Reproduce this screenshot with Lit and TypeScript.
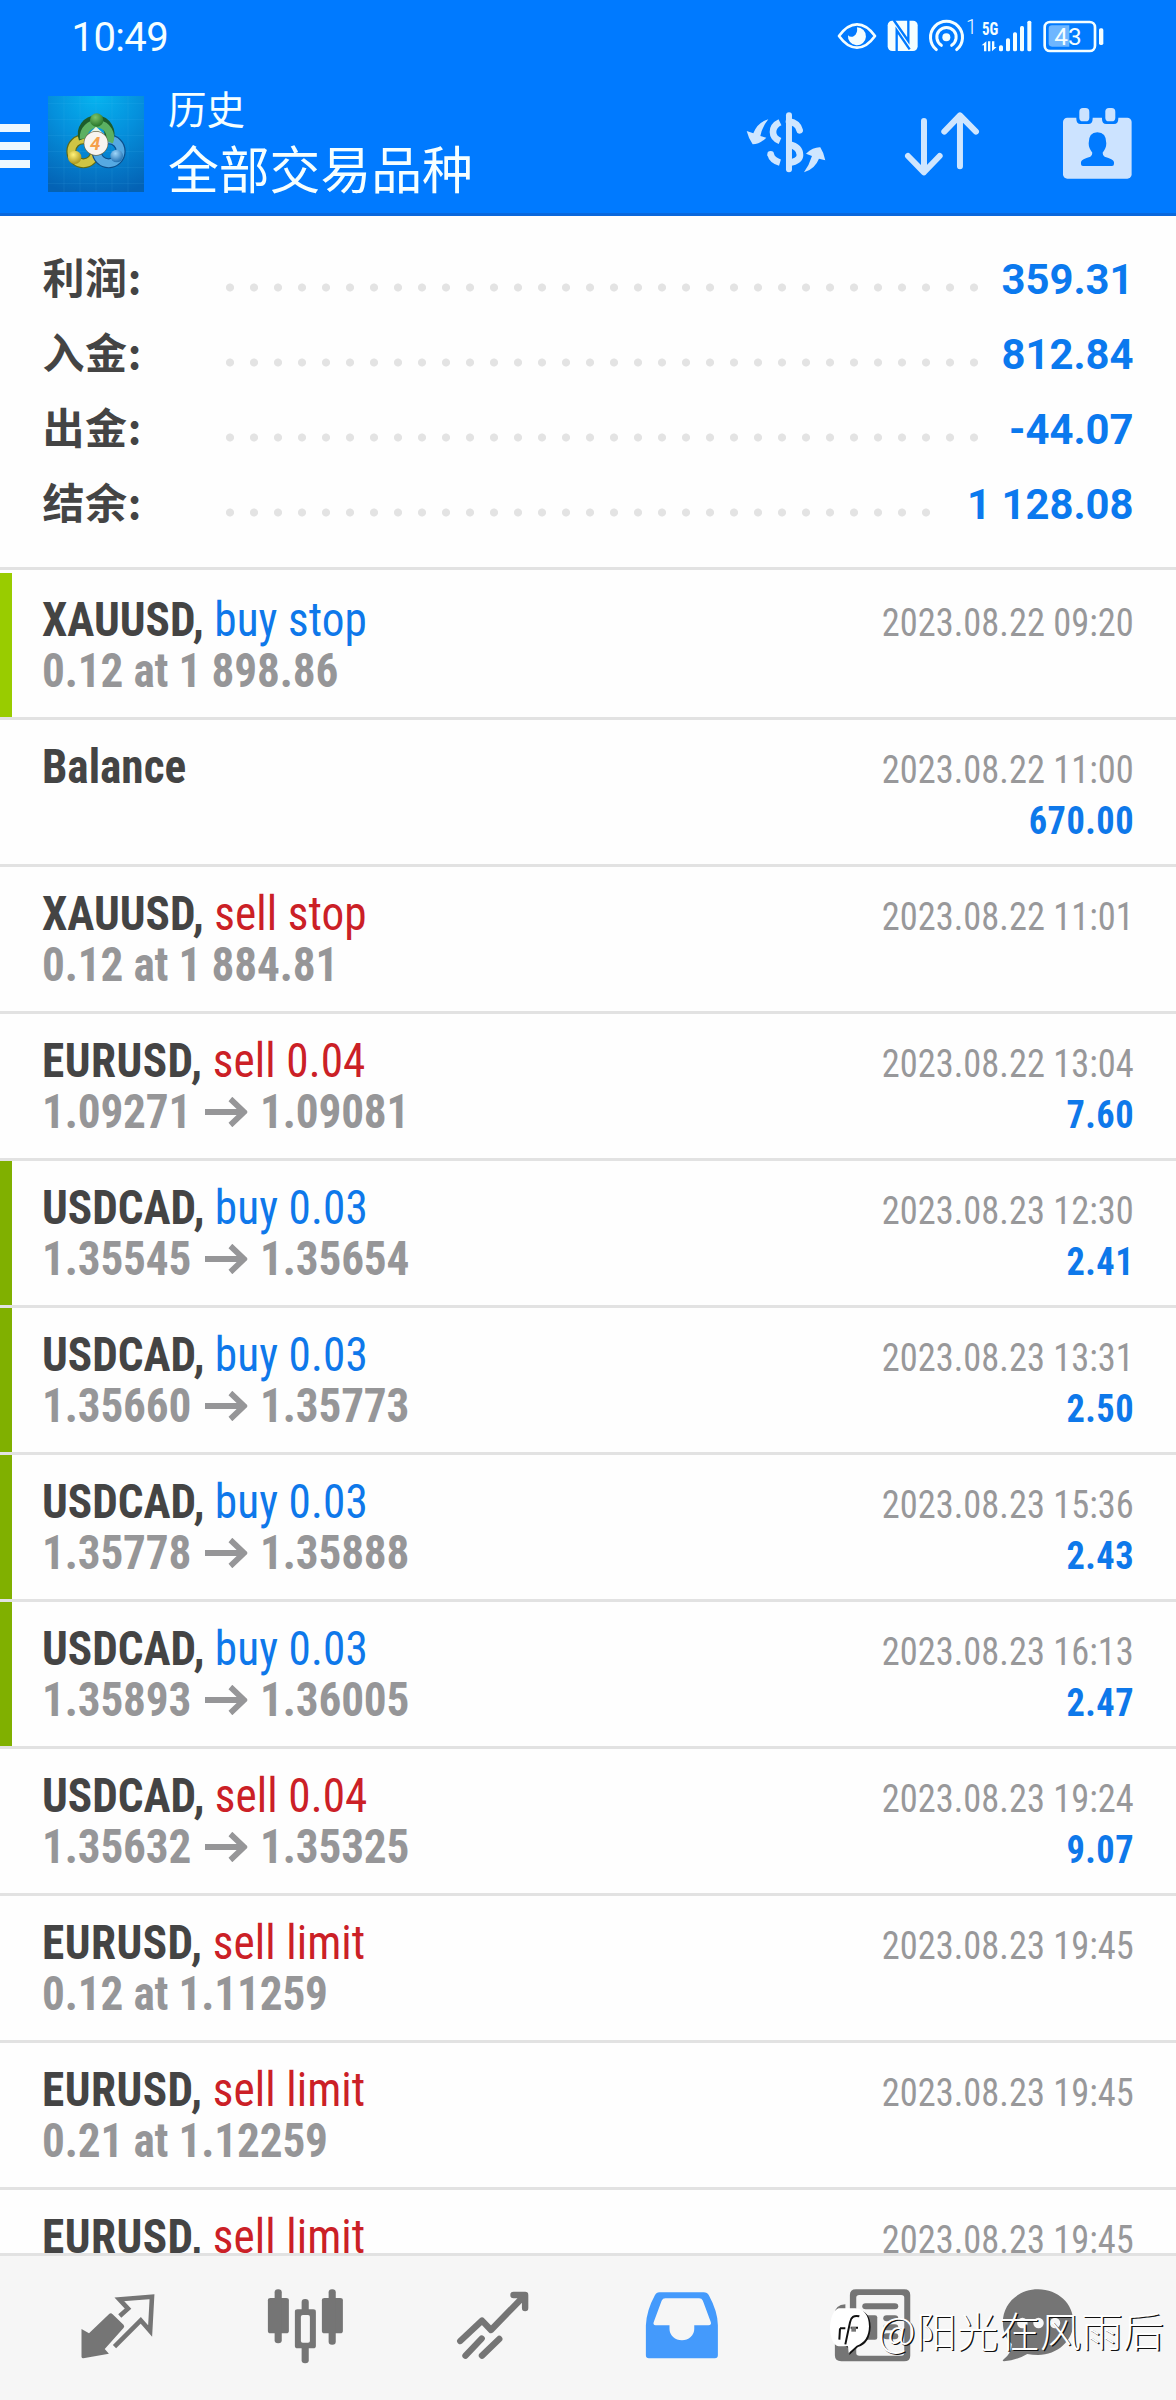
import { LitElement, html, svg, css, nothing } from "lit";
import { customElement, property } from "lit/decorators.js";
import { classMap } from "lit/directives/class-map.js";

type Kind = "buy" | "sell";

interface Deal {
  symbol: string;
  action?: string;
  kind?: Kind;
  detail?: string;
  from?: string;
  to?: string;
  time: string;
  amount?: string;
  mark?: "open" | "profit";
}

interface Total {
  label: string;
  value: string;
  dots: number;
}

const TOTALS: Total[] = [
  { label: "利润:", value: "359.31", dots: 32 },
  { label: "入金:", value: "812.84", dots: 32 },
  { label: "出金:", value: "-44.07", dots: 32 },
  { label: "结余:", value: "1 128.08", dots: 30 },
];

const DEALS: Deal[] = [
  { symbol: "XAUUSD,", action: "buy stop", kind: "buy", detail: "0.12 at 1 898.86", time: "2023.08.22 09:20", mark: "open" },
  { symbol: "Balance", time: "2023.08.22 11:00", amount: "670.00" },
  { symbol: "XAUUSD,", action: "sell stop", kind: "sell", detail: "0.12 at 1 884.81", time: "2023.08.22 11:01" },
  { symbol: "EURUSD,", action: "sell 0.04", kind: "sell", from: "1.09271", to: "1.09081", time: "2023.08.22 13:04", amount: "7.60" },
  { symbol: "USDCAD,", action: "buy 0.03", kind: "buy", from: "1.35545", to: "1.35654", time: "2023.08.23 12:30", amount: "2.41", mark: "profit" },
  { symbol: "USDCAD,", action: "buy 0.03", kind: "buy", from: "1.35660", to: "1.35773", time: "2023.08.23 13:31", amount: "2.50", mark: "profit" },
  { symbol: "USDCAD,", action: "buy 0.03", kind: "buy", from: "1.35778", to: "1.35888", time: "2023.08.23 15:36", amount: "2.43", mark: "profit" },
  { symbol: "USDCAD,", action: "buy 0.03", kind: "buy", from: "1.35893", to: "1.36005", time: "2023.08.23 16:13", amount: "2.47", mark: "profit" },
  { symbol: "USDCAD,", action: "sell 0.04", kind: "sell", from: "1.35632", to: "1.35325", time: "2023.08.23 19:24", amount: "9.07" },
  { symbol: "EURUSD,", action: "sell limit", kind: "sell", detail: "0.12 at 1.11259", time: "2023.08.23 19:45" },
  { symbol: "EURUSD,", action: "sell limit", kind: "sell", detail: "0.21 at 1.12259", time: "2023.08.23 19:45" },
  { symbol: "EURUSD,", action: "sell limit", kind: "sell", time: "2023.08.23 19:45" },
];

const CJK = css`"Noto Sans CJK SC", sans-serif`;

/** System status bar: clock on the left, indicators on the right. */
@customElement("status-bar")
export class StatusBar extends LitElement {
  static styles = css`
    :host {
      display: flex;
      justify-content: space-between;
      height: 72px;
      color: #f4feff;
      font-family: Roboto, sans-serif;
    }
    .clock {
      padding-left: 71.5px;
      font-size: 40px;
      line-height: 75px;
      letter-spacing: -0.6px;
    }
    .indicators {
      display: block;
      width: 456px;
      height: 72px;
    }
    .thin {
      font-family: Roboto, sans-serif;
      font-weight: 300;
    }
    .gen {
      font-family: "Roboto Condensed", Roboto, sans-serif;
      font-weight: 700;
    }
    .level {
      font-family: Roboto, sans-serif;
      font-weight: 400;
    }
  `;

  render() {
    return html`
      <div class="clock">10:49</div>
      <svg class="indicators" viewBox="0 0 1368 216" fill="#f4feff">
        <path
          d="M357 108 Q382 73 411 73 Q440 73 465 108 Q440 143 411 143 Q382 143 357 108Z"
          fill="none" stroke="#f4feff" stroke-width="8" stroke-linejoin="round"
        />
        <path d="M411 82 a27 27 0 1 1 -27 24 q8 8 18 2 q12 -8 9 -26z" />
        <rect x="503" y="62" width="90" height="91" rx="14" />
        <path d="M530 156V91L569 148M521 60L565 123V59" fill="none" stroke="#007aff" stroke-width="7" />
        <g fill="none" stroke="#f4feff" stroke-linecap="round">
          <path d="M649 149 a48 48 0 1 1 61 0" stroke-width="9" />
          <path d="M664 136 a29 29 0 1 1 31 0" stroke-width="9" />
        </g>
        <circle cx="679" cy="112" r="12" />
        <text class="thin" x="738" y="102" font-size="58">1</text>
        <text class="gen" x="786" y="104" font-size="57" textLength="49" lengthAdjust="spacingAndGlyphs">5G</text>
        <path d="M799 124 v30 h-7 v-18 h-7z M804 124 h7 v30 h-7z M816 124 v30 l14 -13 h-7 v-17z" />
        <rect x="837" y="136" width="12" height="18" rx="5" />
        <rect x="858" y="115" width="12" height="39" rx="5" />
        <rect x="879" y="97" width="12" height="57" rx="5" />
        <rect x="900" y="78" width="12" height="76" rx="5" />
        <rect x="922" y="62" width="12" height="92" rx="5" />
        <rect x="974" y="66" width="151" height="87" rx="16" fill="none" stroke="#f4feff" stroke-width="8" />
        <path d="M996 76 h52 v64 h-52 q-10 0 -10 -10 v-44 q0 -10 10 -10z" opacity=".45" />
        <rect x="1137" y="85" width="13" height="50" rx="5" />
        <text class="level" x="1003" y="134" font-size="73">43</text>
      </svg>
    `;
  }
}

/** Title bar with the menu handle, application logo and the three actions. */
@customElement("title-bar")
export class TitleBar extends LitElement {
  static styles = css`
    :host {
      display: flex;
      align-items: flex-start;
      height: 141px;
      padding-right: 43px;
      border-bottom: 3px solid #0a68dc;
      color: #f6ffff;
    }
    .menu {
      display: flex;
      flex-direction: column;
      gap: 10px;
      width: 30px;
      padding-top: 52px;
      margin-right: 18px;
    }
    .bar {
      height: 8px;
      background: #eef8ff;
    }
    .logo {
      width: 96px;
      height: 96px;
      margin: 24px 24px 0 0;
    }
    .four {
      font: italic 700 56px Roboto, sans-serif;
    }
    .titles {
      flex: 1;
      padding-top: 7px;
      font-family: ${CJK};
    }
    .section {
      font-size: 38.5px;
      line-height: 56px;
    }
    .scope {
      font-size: 50.8px;
      line-height: 65px;
    }
    .actions {
      display: flex;
      align-items: center;
      padding-top: 34.5px;
      gap: 79.5px;
    }
    .action {
      display: block;
      height: 73.3px;
    }
    .sort {
      margin: 0 3px 0 -2px;
    }
  `;

  render() {
    return html`
      <div class="menu">
        <div class="bar"></div>
        <div class="bar"></div>
        <div class="bar"></div>
      </div>
      <svg class="logo" viewBox="0 0 288 288">
        <defs>
          <radialGradient id="sky" cx=".5" cy="0" r="1.05">
            <stop offset="0" stop-color="#06b4f0" />
            <stop offset=".45" stop-color="#0590dc" />
            <stop offset="1" stop-color="#0462b4" />
          </radialGradient>
          <radialGradient id="gb" cx=".4" cy=".3" r=".8"><stop offset="0" stop-color="#7cc46a" /><stop offset="1" stop-color="#1c6a22" /></radialGradient>
          <radialGradient id="yb" cx=".4" cy=".3" r=".8"><stop offset="0" stop-color="#fff27a" /><stop offset="1" stop-color="#a08a10" /></radialGradient>
          <radialGradient id="bb" cx=".4" cy=".3" r=".8"><stop offset="0" stop-color="#9fd6fa" /><stop offset="1" stop-color="#1263a8" /></radialGradient>
        </defs>
        <rect width="288" height="288" fill="url(#sky)" />
        <path
          d="M48 0V288M96 0V288M144 0V288M192 0V288M240 0V288M0 22H288M0 70H288M0 118H288M0 166H288M0 214H288M0 262H288"
          stroke="#5cc4f4" stroke-opacity=".18" stroke-width="2"
        />
        <g fill="none">
          <circle cx="106" cy="166" r="36" stroke="#5d6a18" stroke-width="30" />
          <circle cx="106" cy="166" r="36" stroke="#cfc544" stroke-width="23" />
          <circle cx="182" cy="166" r="36" stroke="#0c4f8c" stroke-width="30" />
          <circle cx="182" cy="166" r="36" stroke="#56a9e2" stroke-width="23" />
          <path d="M107 128 A40 40 0 1 1 180 132" stroke="#1d5c2c" stroke-width="30" />
          <path d="M107 128 A40 40 0 1 1 184 138" stroke="#5bb062" stroke-width="23" />
        </g>
        <path d="M122 114 L144 92 L168 114Z" fill="#e8f4e4" />
        <circle cx="146" cy="72" r="20" fill="url(#gb)" />
        <circle cx="80" cy="184" r="20" fill="url(#yb)" />
        <circle cx="206" cy="180" r="19" fill="url(#bb)" />
        <circle cx="144" cy="142" r="37" fill="#6b6b50" />
        <circle cx="144" cy="142" r="35" fill="#f8f4f0" />
        <text class="four" x="126" y="163" fill="#f5a04c">4</text>
      </svg>
      <div class="titles">
        <div class="section">历史</div>
        <div class="scope">全部交易品种</div>
      </div>
      <div class="actions">
        <svg class="action" viewBox="78 320 240 220" fill="#cfe6ff">
          <rect x="198" y="336" width="18" height="180" rx="9" />
          <g fill="none" stroke="#cfe6ff" stroke-width="20">
            <path d="M180 366 Q159 376 159 395 Q159 413 180 422" />
            <path d="M152 462 Q156 480 180 487" stroke-linecap="butt" />
            <path d="M207 363 Q234 368 239 390" stroke-linecap="round" />
            <path d="M207 432 Q240 440 240 464 Q240 482 207 488" />
          </g>
          <circle cx="152" cy="462" r="10" />
          <path d="M145 357 Q112 366 100 399 L80 392 Q86 415 98 432 Q118 432 139 412 L121 407 Q126 380 145 357Z" />
          <path d="M252 516 Q285 506 297 475 L316 480 Q312 458 301 441 Q280 440 258 460 L276 467 Q268 494 252 516Z" />
        </svg>
        <svg class="action sort" viewBox="552 320 228 220" fill="none" stroke="#cfe6ff" stroke-width="18" stroke-linecap="round" stroke-linejoin="round">
          <path d="M612 362V514M564 467L612 516L659 467M720 498V346M673 394L720 345L768 394" />
        </svg>
        <svg class="action" viewBox="1028 320 212 220" fill="#cce3ff">
          <rect x="1031" y="352" width="206" height="183" rx="13" />
          <path d="M1071 350 h49 v5 q0 16 -13 16 h-23 q-13 0 -13 -16z M1148 350 h49 v5 q0 16 -13 16 h-23 q-13 0 -13 -16z" fill="#007aff" />
          <rect x="1080" y="323" width="30" height="40" rx="11" />
          <rect x="1158" y="323" width="30" height="40" rx="11" />
          <path
            d="M1134 396 q27 0 27 33 q0 15 -11 28 q0 9 6 12 q26 7 28 16 v6 q0 6 -6 6 h-87 q-6 0 -6 -6 v-6 q2 -9 28 -16 q6 -3 6 -12 q-11 -13 -11 -28 q0 -33 26 -33z"
            fill="#007aff"
          />
        </svg>
      </div>
    `;
  }
}

/** Account totals joined to their values by a dotted leader. */
@customElement("totals-panel")
export class TotalsPanel extends LitElement {
  static styles = css`
    :host {
      display: block;
      padding: 22px 42.5px 29px 42.5px;
      border-bottom: 3px solid #e2e2e2;
    }
    .total {
      display: flex;
      align-items: baseline;
      height: 75px;
      line-height: 75px;
    }
    .label {
      width: 175.5px;
      font-family: ${CJK};
      font-weight: 700;
      font-size: 42px;
      letter-spacing: 0.6px;
      color: #444;
    }
    .leader {
      height: 13px;
      background: radial-gradient(circle at 12px 6.5px, #e3e3e3 3.6px, transparent 4.4px) 0 0 / 24px 13px repeat-x;
    }
    .value {
      margin-left: auto;
      font-family: Roboto, sans-serif;
      font-weight: 700;
      font-size: 41.8px;
      color: #0b79ee;
    }
  `;

  render() {
    return TOTALS.map(
      (t) => html`
        <div class="total">
          <div class="label">${t.label}</div>
          <div class="leader" style="width:${t.dots * 24}px"></div>
          <div class="value">${t.value}</div>
        </div>
      `,
    );
  }
}

/** One line of the trade history. */
@customElement("deal-row")
export class DealRow extends LitElement {
  @property({ attribute: false }) deal!: Deal;

  static styles = css`
    :host {
      display: block;
      border-bottom: 3px solid #e2e2e2;
    }
    .row {
      display: flex;
      justify-content: space-between;
      box-sizing: border-box;
      height: 144px;
      padding: 21px 42px 0 30px;
      border-left: 12px solid transparent;
      font-family: "Roboto Condensed", Roboto, sans-serif;
      line-height: 51px;
      white-space: nowrap;
    }
    .open {
      border-left-color: #99cc00;
    }
    .profit {
      border-left-color: #80b000;
    }
    .main {
      font-size: 48px;
      transform-origin: 0 0;
      transform: scaleX(0.942);
    }
    .symbol {
      font-weight: 700;
      color: #444;
    }
    .euro {
      letter-spacing: 0.5px;
    }
    .buy {
      letter-spacing: 0.1px;
      color: #0e78ea;
    }
    .sell {
      letter-spacing: 0.1px;
      color: #cb2026;
    }
    .detail {
      display: flex;
      height: 51px;
      font-weight: 700;
      letter-spacing: -0.15px;
      color: #969698;
    }
    .arrow {
      width: 45px;
      height: 30px;
      margin: 11px 13.5px 0 14.5px;
    }
    .side {
      padding-top: 4px;
      font-size: 39px;
      text-align: right;
      transform-origin: 100% 0;
      transform: scaleX(0.934);
      color: #98989a;
    }
    .amount {
      font-weight: 700;
      letter-spacing: 0.5px;
      margin-right: -0.5px;
      color: #0e78ea;
    }
  `;

  render() {
    const d = this.deal;
    const euro = d.symbol.startsWith("EUR");
    return html`
      <div class=${classMap({ row: true, open: d.mark === "open", profit: d.mark === "profit" })}>
        <div class="main">
          <div>
            <span class=${classMap({ symbol: true, euro })}>${d.symbol}</span>
            ${d.action ? html`<span class=${d.kind!}>${d.action}</span>` : nothing}
          </div>
          ${d.detail ? html`<div class="detail">${d.detail}</div>` : nothing}
          ${d.from
            ? html`<div class="detail">
                <span>${d.from}</span>
                <svg class="arrow" viewBox="0 0 45 30" fill="none" stroke="#969698" stroke-width="6">
                  <path d="M0 15H41M27 2L41.5 15L27 28" />
                </svg>
                <span>${d.to}</span>
              </div>`
            : nothing}
        </div>
        <div class="side">
          <div>${d.time}</div>
          ${d.amount ? html`<div class="amount">${d.amount}</div>` : nothing}
        </div>
      </div>
    `;
  }
}

const navIcon = (x: number, w: number, body: unknown) => html`
  <svg
    class="icon"
    viewBox="${x} 380 ${w} 232"
    preserveAspectRatio="none"
    style="width:${(w * 0.375).toFixed(2)}px"
  >${body}</svg>
`;

/** Bottom navigation. */
@customElement("nav-bar")
export class NavBar extends LitElement {
  static styles = css`
    :host {
      display: grid;
      grid-template-columns: 187.5px 187.5px 187.5px 191px 190px 141px;
      justify-items: center;
      box-sizing: border-box;
      height: 147px;
      padding: 30.7px 0 0 24px;
      border-top: 3px solid #e2e2e2;
      background: #f6f6f6;
    }
    .icon {
      display: block;
      height: 77.3px;
      fill: #757575;
    }
    .line {
      fill: none;
      stroke: #757575;
      stroke-width: 6.4px;
      stroke-linecap: round;
      stroke-linejoin: round;
      vector-effect: non-scaling-stroke;
    }
    .outline {
      fill: none;
      stroke: #757575;
      stroke-width: 4.6px;
      vector-effect: non-scaling-stroke;
    }
    .hole {
      fill: #f6f6f6;
    }
    .active {
      fill: #449afc;
    }
  `;

  render() {
    return html`
      ${navIcon(215, 202, svg`
        <path class="outline" d="M321 467L343 445L320 417L407 409L402 512L377 480L307 559" />
        <path d="M219 506L239 519L292 462Q297 456 302 462L331 493Q335 498 331 503L281 566L292 580L224 594Q219 594 219 589Z" />
      `)}
      ${navIcon(710, 210, svg`
        <rect x="715" y="413" width="56" height="106" rx="7" />
        <rect x="733" y="387" width="19" height="162" rx="9" />
        <rect x="859" y="413" width="56" height="106" rx="7" />
        <rect x="877" y="387" width="19" height="166" rx="9" />
        <rect x="805" y="416" width="19" height="60" rx="9" />
        <rect x="805" y="540" width="19" height="69" rx="9" />
        <rect x="787" y="447" width="56" height="117" rx="7" />
        <rect class="hole" x="803" y="464" width="24" height="83" rx="5" />
      `)}
      ${navIcon(1215, 202, svg`
        <path class="line" d="M1229 542L1287 481L1311 509L1400 406M1371 404H1402V443" />
        <path class="line" d="M1243 586L1286 535M1287 586L1333 536" />
      `)}
      ${navIcon(151, 202, svg`
        <path class="active" d="M192 396H310Q320 396 324 405Q348 455 348 495V585Q348 594 340 594H164Q156 594 156 585V495Q158 450 180 405Q184 396 192 396Z" />
        <path class="hole" d="M208 414H298Q305 414 308 421L329 485Q332 494 323 495H285V506A33 34 0 0 1 219 506V495H182Q174 494 177 485L198 421Q201 414 208 414Z" />
      `)}
      ${navIcon(652, 212, svg`
        <path d="M685 432Q657 434 657 460V585Q657 603 674 603H842Q858 603 858 586V404Q858 387 842 387H713Q697 387 697 404V560H685Z" />
        <rect class="hole" x="714" y="404" width="128" height="182" rx="8" />
        <rect x="730" y="429" width="96" height="18" rx="9" />
        <rect x="728" y="465" width="42" height="73" rx="6" />
        <rect x="786" y="465" width="40" height="18" rx="9" />
        <rect x="786" y="492" width="40" height="18" rx="9" />
        <rect x="786" y="519" width="40" height="18" rx="9" />
      `)}
      ${navIcon(1100, 198, svg`
        <path d="M1199 387C1252 387 1293 430 1293 486C1293 542 1250 584 1199 584Q1184 584 1170 581Q1142 600 1108 603Q1101 602 1108 596Q1127 580 1129 551C1112 535 1105 512 1105 486C1105 430 1146 387 1199 387Z" />
        <ellipse class="hole" cx="1157" cy="488" rx="14" ry="16" />
        <ellipse class="hole" cx="1200" cy="488" rx="14" ry="16" />
        <ellipse class="hole" cx="1244" cy="488" rx="14" ry="16" />
      `)}
    `;
  }
}

@customElement("app-root")
export class AppRoot extends LitElement {
  static styles = css`
    :host {
      display: flex;
      flex-direction: column;
      position: relative;
      width: 1176px;
      height: 2400px;
      overflow: hidden;
      background: #fefefe;
    }
    .top {
      background: #007aff;
    }
    .history {
      flex: 1;
      min-height: 0;
      overflow: hidden;
      padding-top: 3px;
    }
    .credit {
      position: absolute;
      right: 12px;
      bottom: 41px;
      display: flex;
      align-items: center;
      color: #fff;
      font-family: ${CJK};
      font-weight: 300;
      font-size: 41.4px;
      line-height: 60px;
      text-shadow: 1.3px 1.3px 0.3px #111;
    }
    .badge {
      width: 42px;
      height: 52px;
      margin: 7px 6px 0 0;
    }
  `;

  render() {
    return html`
      <div class="top">
        <status-bar></status-bar>
        <title-bar></title-bar>
      </div>
      <totals-panel></totals-panel>
      <div class="history">
        ${DEALS.map((deal) => html`<deal-row .deal=${deal}></deal-row>`)}
      </div>
      <nav-bar></nav-bar>
      <div class="credit">
        <svg class="badge" viewBox="0 0 126 156">
          <path d="M52 8H80Q122 12 122 60Q120 110 84 120L58 144L60 124L44 118Z" fill="#111" />
          <path d="M26 4H76Q116 8 117 58Q116 104 80 116L56 138L54 118H26Q2 112 0 62Q2 14 26 4Z" fill="#fff" />
          <path d="M88 28Q64 22 60 46L46 112M30 64L28 98M30 64H46M62 62H84" fill="none" stroke="#111" stroke-width="6" />
          <rect x="64" y="60" width="14" height="14" fill="#757575" />
        </svg>
        <span>@阳光在风雨后</span>
      </div>
    `;
  }
}
